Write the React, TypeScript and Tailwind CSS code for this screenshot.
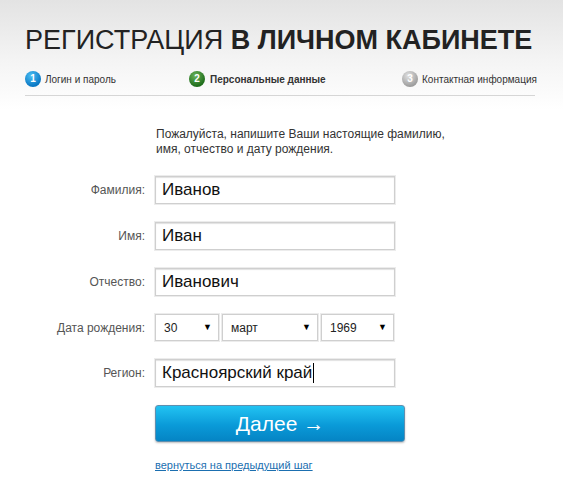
import React from 'react';

const font = { fontFamily: '"Liberation Sans", Arial, sans-serif' };

function StepBadge({ n, color }: { n: number; color: 'blue' | 'green' | 'gray' }) {
  const bg =
    color === 'blue'
      ? 'bg-[radial-gradient(circle_at_40%_30%,#4cc0f5,#0a78c4_70%)]'
      : color === 'green'
      ? 'bg-[radial-gradient(circle_at_40%_30%,#6cb35a,#1f6e1c_70%)]'
      : 'bg-[radial-gradient(circle_at_40%_30%,#e2e2e2,#9a9a9a_75%)]';
  return (
    <span
      className={`${bg} flex h-[16px] w-[16px] shrink-0 items-center justify-center rounded-full text-[10px] font-bold leading-none text-white`}
    >
      {n}
    </span>
  );
}

function TextField({ value, caret }: { value: string; caret?: boolean }) {
  return (
    <div className="flex h-[28px] w-[240px] items-center border border-[#cfcfcf] bg-white pl-[6px] text-[17px] text-[#111] shadow-[inset_0_1px_1px_rgba(0,0,0,0.12),0_0_0_1px_#ececec]">
      {value}
      {caret && <span className="ml-[1px] h-[20px] border-l border-black" />}
    </div>
  );
}

function SelectBox({ value, width }: { value: string; width: string }) {
  return (
    <div
      className={`${width} flex h-[27px] items-center justify-between border border-[#cfcfcf] bg-white pl-[8px] pr-[6px] text-[12px] text-[#222] shadow-[0_0_0_1px_#ececec]`}
    >
      <span>{value}</span>
      <span className="text-[9px] text-black">▼</span>
    </div>
  );
}

function Row({ label, children }: { label: string; children: React.ReactNode }) {
  return (
    <div className="flex items-center">
      <div className="w-[146px] pr-[1px] text-right text-[12px] text-[#555]">{label}</div>
      <div className="ml-[9px] flex">{children}</div>
    </div>
  );
}

export default function App() {
  return (
    <div
      style={font}
      className="min-h-[480px] w-[563px] bg-[linear-gradient(to_bottom,#e3e3e3_0px,#f4f4f4_60px,#ffffff_110px)]"
    >
      <div className="px-[25px] pt-[24px]">
        <h1 className="whitespace-nowrap text-[27px] leading-[32px] text-[#222]">
          РЕГИСТРАЦИЯ <span className="font-bold">В ЛИЧНОМ КАБИНЕТЕ</span>
        </h1>
        <div className="mt-[15px] flex h-[16px] w-[510px] items-center whitespace-nowrap text-[10px] text-[#333]">
          <div className="flex w-[164px] shrink-0 items-center gap-[4px]">
            <StepBadge n={1} color="blue" />
            <span>Логин и пароль</span>
          </div>
          <div className="flex w-[213px] shrink-0 items-center gap-[5px] font-bold">
            <StepBadge n={2} color="green" />
            <span>Персональные данные</span>
          </div>
          <div className="flex shrink-0 items-center gap-[4px]">
            <StepBadge n={3} color="gray" />
            <span>Контактная информация</span>
          </div>
        </div>
        <div className="mt-[8px] h-px w-[510px] bg-[#d6d6d6]" />
      </div>

      <div className="pt-[31px]">
        <p className="ml-[156px] text-[12px] leading-[15px] text-[#333]">
          Пожалуйста, напишите Ваши настоящие фамилию,
          <br />
          имя, отчество и дату рождения.
        </p>
        <div className="mt-[19px] flex flex-col gap-[18px]">
          <Row label="Фамилия:">
            <TextField value="Иванов" />
          </Row>
          <Row label="Имя:">
            <TextField value="Иван" />
          </Row>
          <Row label="Отчество:">
            <TextField value="Иванович" />
          </Row>
          <Row label="Дата рождения:">
            <div className="flex gap-[3px]">
              <SelectBox value="30" width="w-[64px]" />
              <SelectBox value="март" width="w-[96px]" />
              <SelectBox value="1969" width="w-[73px]" />
            </div>
          </Row>
          <Row label="Регион:">
            <TextField value="Красноярский край" caret />
          </Row>
        </div>
        <div className="ml-[155px] mt-[18px]">
          <button className="flex h-[37px] w-[250px] items-center justify-center rounded-[3px] border border-[#5e8fb0] bg-[linear-gradient(to_bottom,#22c3f2,#0a9ad8_55%,#0584c4)] text-[21px] text-white shadow-[0_1px_2px_rgba(0,0,0,0.25)]">
            Далее →
          </button>
          <a href="#" className="mt-[15px] inline-block text-[11px] text-[#1b6fb0] underline">
            вернуться на предыдущий шаг
          </a>
        </div>
      </div>
    </div>
  );
}
